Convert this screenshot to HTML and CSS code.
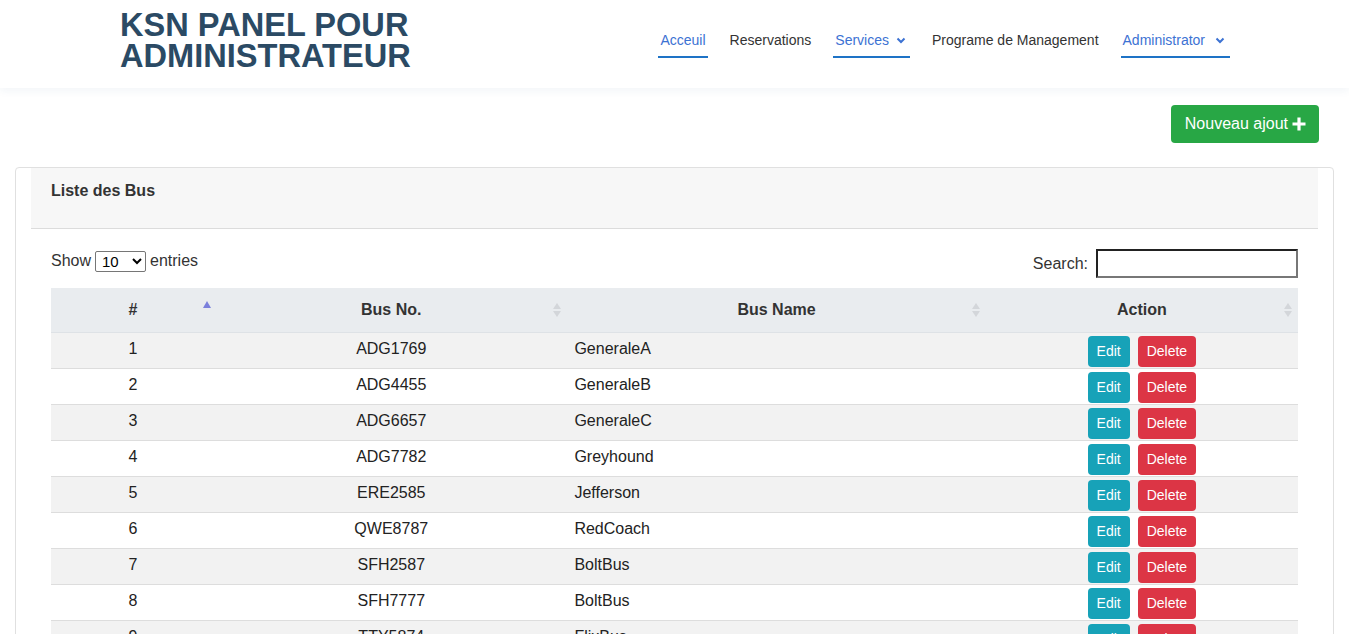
FILE: index.html
```html
<!DOCTYPE html>
<html lang="fr">
<head>
<meta charset="utf-8">
<title>KSN Panel</title>
<link rel="stylesheet" href="styles.css">
</head>
<body>
<header class="topbar">
  <h1 class="brand">KSN PANEL POUR<br>ADMINISTRATEUR</h1>
  <nav class="nav">
    <a class="nav-link active" href="#">Acceuil</a>
    <a class="nav-link" href="#">Reservations</a>
    <a class="nav-link active" href="#">Services <svg class="chev" width="10" height="7" viewBox="0 0 10 7"><path d="M1.5 1.5 L5 5 L8.5 1.5" fill="none" stroke="currentColor" stroke-width="2"/></svg></a>
    <a class="nav-link" href="#">Programe de Management</a>
    <a class="nav-link active wide" href="#">Administrator <svg class="chev" width="10" height="7" viewBox="0 0 10 7"><path d="M1.5 1.5 L5 5 L8.5 1.5" fill="none" stroke="currentColor" stroke-width="2"/></svg></a>
  </nav>
</header>

<main class="main">
  <div class="actions">
    <button class="btn-add">Nouveau ajout <svg width="14" height="14" viewBox="0 0 14 14"><path d="M7 0.5 V13.5 M0.5 7 H13.5" stroke="#fff" stroke-width="3.2"/></svg></button>
  </div>

  <section class="card">
    <div class="card-header">Liste des Bus</div>
    <div class="card-body">
      <div class="dt-top">
        <label class="dt-length">Show <select class="dt-select"><option>10</option><option>25</option><option>50</option></select> entries</label>
        <label class="dt-filter">Search: <input class="dt-input" type="search"></label>
      </div>
      <table class="dt">
        <thead>
          <tr>
            <th class="c-num sort-asc">#</th>
            <th class="c-no sort">Bus No.</th>
            <th class="c-name sort">Bus Name</th>
            <th class="c-act sort">Action</th>
          </tr>
        </thead>
        <tbody>
          <tr><td class="t-c">1</td><td class="t-c">ADG1769</td><td class="t-l">GeneraleA</td><td class="t-act"><span class="btns"><button class="btn edit">Edit</button><button class="btn del">Delete</button></span></td></tr>
          <tr><td class="t-c">2</td><td class="t-c">ADG4455</td><td class="t-l">GeneraleB</td><td class="t-act"><span class="btns"><button class="btn edit">Edit</button><button class="btn del">Delete</button></span></td></tr>
          <tr><td class="t-c">3</td><td class="t-c">ADG6657</td><td class="t-l">GeneraleC</td><td class="t-act"><span class="btns"><button class="btn edit">Edit</button><button class="btn del">Delete</button></span></td></tr>
          <tr><td class="t-c">4</td><td class="t-c">ADG7782</td><td class="t-l">Greyhound</td><td class="t-act"><span class="btns"><button class="btn edit">Edit</button><button class="btn del">Delete</button></span></td></tr>
          <tr><td class="t-c">5</td><td class="t-c">ERE2585</td><td class="t-l">Jefferson</td><td class="t-act"><span class="btns"><button class="btn edit">Edit</button><button class="btn del">Delete</button></span></td></tr>
          <tr><td class="t-c">6</td><td class="t-c">QWE8787</td><td class="t-l">RedCoach</td><td class="t-act"><span class="btns"><button class="btn edit">Edit</button><button class="btn del">Delete</button></span></td></tr>
          <tr><td class="t-c">7</td><td class="t-c">SFH2587</td><td class="t-l">BoltBus</td><td class="t-act"><span class="btns"><button class="btn edit">Edit</button><button class="btn del">Delete</button></span></td></tr>
          <tr><td class="t-c">8</td><td class="t-c">SFH7777</td><td class="t-l">BoltBus</td><td class="t-act"><span class="btns"><button class="btn edit">Edit</button><button class="btn del">Delete</button></span></td></tr>
          <tr><td class="t-c">9</td><td class="t-c">TTY5874</td><td class="t-l">FlixBus</td><td class="t-act"><span class="btns"><button class="btn edit">Edit</button><button class="btn del">Delete</button></span></td></tr>
          <tr><td class="t-c">10</td><td class="t-c">WTR1245</td><td class="t-l">Megabus</td><td class="t-act"><span class="btns"><button class="btn edit">Edit</button><button class="btn del">Delete</button></span></td></tr>
        </tbody>
      </table>
    </div>
  </section>
</main>
</body>
</html>
```

FILE: styles.css
```css
* { box-sizing: border-box; }

html, body {
  margin: 0;
  padding: 0;
  background: #fff;
  font-family: "Liberation Sans", Arial, sans-serif;
  color: #333;
}

.topbar {
  height: 88px;
  display: flex;
  justify-content: space-between;
  align-items: flex-start;
  padding: 0 119px 0 120px;
  background: #fff;
  box-shadow: 0 3px 8px rgba(40, 80, 140, 0.06);
  position: relative;
  z-index: 1;
}

.brand {
  margin: 9px 0 0 0;
  font-size: 32.6px;
  line-height: 31px;
  font-weight: 700;
  color: #2b4a64;
  letter-spacing: 0;
}

.nav {
  display: flex;
  gap: 20px;
  margin-top: 30px;
}

.nav-link {
  display: flex;
  align-items: center;
  padding: 0 2px 6px 2px;
  height: 28px;
  line-height: 20px;
  font-size: 14px;
  color: #333;
  text-decoration: none;
  border-bottom: 2px solid transparent;
}

.nav-link.active {
  color: #3c72d3;
  border-bottom-color: #1e73c6;
}

.chev {
  margin-left: 7px;
  margin-right: 2px;
}

.nav-link.wide .chev {
  margin-left: 10px;
  margin-right: 3px;
}

.main {
  padding: 17px 15px 0 15px;
}

.actions {
  display: flex;
  justify-content: flex-end;
  padding-right: 15px;
  margin-bottom: 24px;
}

.btn-add {
  height: 38px;
  padding: 0 13px 0 14px;
  border: none;
  border-radius: 4px;
  background: #28a745;
  color: #fff;
  font-family: "Liberation Sans", Arial, sans-serif;
  font-size: 16px;
  display: flex;
  align-items: center;
  gap: 4px;
}

.card {
  border: 1px solid #e0e0e0;
  border-radius: 4px;
  padding: 0 15px;
  background: #fff;
}

.card-header {
  height: 61px;
  padding: 13px 20px 0 20px;
  line-height: 20px;
  font-size: 16px;
  font-weight: 700;
  color: #333;
  background: #f7f7f7;
  border-bottom: 1px solid #dcdcdc;
}

.card-body {
  padding: 20px 20px 20px 20px;
}

.dt-top {
  display: flex;
  justify-content: space-between;
  align-items: flex-start;
  margin-bottom: 10px;
  font-size: 16px;
}

.dt-length {
  display: flex;
  align-items: center;
  height: 22px;
  margin-top: 1px;
  gap: 4px;
}

.dt-select {
  width: 51px;
  height: 21px;
  font-family: "Liberation Sans", Arial, sans-serif;
  font-size: 15px;
  padding: 0 0 0 2px;
  border: 1px solid #767676;
  border-radius: 2px;
  background: #fff;
  color: #000;
}

.dt-filter {
  display: flex;
  align-items: center;
  gap: 8px;
  padding-top: 0;
}

.dt-input {
  width: 202px;
  height: 29px;
  border: 2px solid;
  border-color: #222 #777 #777 #222;
  background: #fff;
  font-size: 15px;
}

.dt {
  width: 100%;
  border-collapse: collapse;
  table-layout: fixed;
  font-size: 16px;
}

.dt th {
  position: relative;
  height: 44px;
  background: #e9ecef;
  font-weight: 700;
  text-align: center;
  color: #333;
  padding: 0;
  border-bottom: 1px solid #dee2e6;
}

.c-num { width: 164px; }
.c-no { width: 352px; }
.c-name { width: 418px; }
.c-act { width: 312px; }

.dt th.sort::before,
.dt th.sort::after,
.dt th.sort-asc::before {
  content: "";
  position: absolute;
  right: 6px;
  width: 0;
  height: 0;
  border-left: 4px solid transparent;
  border-right: 4px solid transparent;
}

.dt th.sort::before {
  top: 15px;
  border-bottom: 6px solid #d3d6da;
}

.dt th.sort::after {
  top: 23px;
  border-top: 6px solid #d3d6da;
}

.dt th.sort-asc::before {
  top: 13px;
  right: 4px;
  border-bottom: 7px solid #7b80dc;
}

.dt td {
  vertical-align: top;
  border-top: 1px solid #dddddd;
  line-height: 18px;
  color: #222;
  padding: 7px 10px 10px 10px;
}

.dt tbody tr:nth-child(odd) { background: #f2f2f2; }
.dt tbody tr:nth-child(even) { background: #fff; }

.t-c { text-align: center; }
.t-l { text-align: left; padding-left: 7px !important; }

.dt td.t-act {
  padding: 3px 10px 1px 10px;
  text-align: center;
}

.btns {
  display: inline-flex;
  gap: 8px;
}

.btn {
  height: 31px;
  padding: 0 9px;
  border: none;
  border-radius: 4px;
  color: #fff;
  font-family: "Liberation Sans", Arial, sans-serif;
  font-size: 14px;
}

.btn.edit { background: #17a2b8; }
.btn.del { background: #dc3545; }
```
